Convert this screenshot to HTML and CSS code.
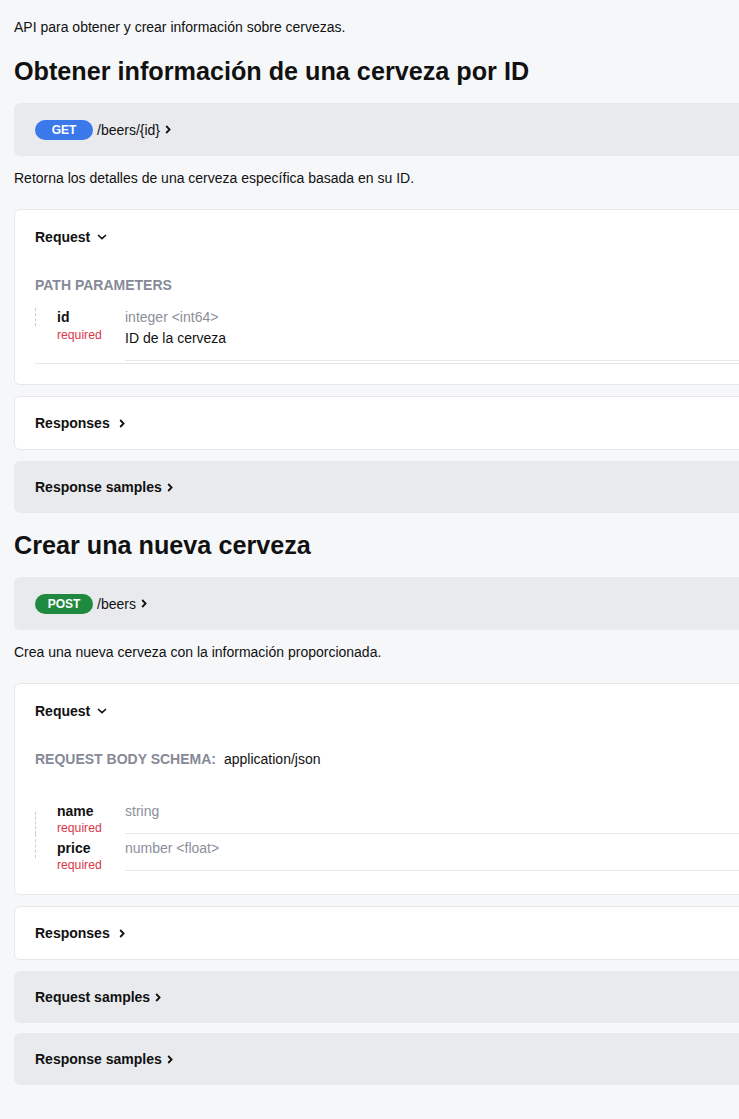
FILE: index.html
```html
<!DOCTYPE html>
<html lang="es">
<head>
<meta charset="utf-8">
<title>API Cervezas</title>
<link rel="stylesheet" href="styles.css">
</head>
<body>
<main class="page">
  <p class="intro">API para obtener y crear información sobre cervezas.</p>

  <section class="op">
    <h2 class="op-title">Obtener información de una cerveza por ID</h2>
    <div class="endpoint">
      <span class="method method-get">GET</span>
      <span class="path">/beers/{id}</span>
      <svg class="chev chev-right" width="6" height="9" viewBox="0 0 6 9"><polyline points="1.2,1 4.6,4.5 1.2,8" fill="none" stroke="#111" stroke-width="1.8"/></svg>
    </div>
    <p class="desc">Retorna los detalles de una cerveza específica basada en su ID.</p>

    <div class="card">
      <div class="card-head">Request
        <svg class="chev chev-down" width="10" height="6" viewBox="0 0 10 6"><polyline points="1,1 5,4.6 9,1" fill="none" stroke="#111" stroke-width="1.6"/></svg>
      </div>
      <div class="section-label">PATH PARAMETERS</div>
      <div class="params params-path">
        <div class="param">
          <div class="rail"><div class="rail-line rail-single"></div></div>
          <div class="pname"><div class="pname-text">id</div><div class="req">required</div></div>
          <div class="pinfo"><div class="ptype">integer &lt;int64&gt;</div><div class="pdesc">ID de la cerveza</div></div>
        </div>
      </div>
    </div>

    <div class="card card-row">Responses
      <svg class="chev chev-right" width="6" height="9" viewBox="0 0 6 9"><polyline points="1.2,1 4.6,4.5 1.2,8" fill="none" stroke="#111" stroke-width="1.8"/></svg>
    </div>
    <div class="bar-row">Response samples
      <svg class="chev chev-right" width="6" height="9" viewBox="0 0 6 9"><polyline points="1.2,1 4.6,4.5 1.2,8" fill="none" stroke="#111" stroke-width="1.8"/></svg>
    </div>
  </section>

  <section class="op">
    <h2 class="op-title">Crear una nueva cerveza</h2>
    <div class="endpoint">
      <span class="method method-post">POST</span>
      <span class="path">/beers</span>
      <svg class="chev chev-right" width="6" height="9" viewBox="0 0 6 9"><polyline points="1.2,1 4.6,4.5 1.2,8" fill="none" stroke="#111" stroke-width="1.8"/></svg>
    </div>
    <p class="desc">Crea una nueva cerveza con la información proporcionada.</p>

    <div class="card">
      <div class="card-head">Request
        <svg class="chev chev-down" width="10" height="6" viewBox="0 0 10 6"><polyline points="1,1 5,4.6 9,1" fill="none" stroke="#111" stroke-width="1.6"/></svg>
      </div>
      <div class="section-label schema">REQUEST BODY SCHEMA: <span class="mime">application/json</span></div>
      <div class="params params-body">
        <div class="param">
          <div class="rail"><div class="rail-line rail-first"></div></div>
          <div class="pname"><div class="pname-text">name</div><div class="req">required</div></div>
          <div class="pinfo"><div class="ptype">string</div></div>
        </div>
        <div class="param">
          <div class="rail"><div class="rail-line rail-last"></div></div>
          <div class="pname"><div class="pname-text">price</div><div class="req">required</div></div>
          <div class="pinfo"><div class="ptype">number &lt;float&gt;</div></div>
        </div>
      </div>
    </div>

    <div class="card card-row">Responses
      <svg class="chev chev-right" width="6" height="9" viewBox="0 0 6 9"><polyline points="1.2,1 4.6,4.5 1.2,8" fill="none" stroke="#111" stroke-width="1.8"/></svg>
    </div>
    <div class="bar-row">Request samples
      <svg class="chev chev-right" width="6" height="9" viewBox="0 0 6 9"><polyline points="1.2,1 4.6,4.5 1.2,8" fill="none" stroke="#111" stroke-width="1.8"/></svg>
    </div>
    <div class="bar-row">Response samples
      <svg class="chev chev-right" width="6" height="9" viewBox="0 0 6 9"><polyline points="1.2,1 4.6,4.5 1.2,8" fill="none" stroke="#111" stroke-width="1.8"/></svg>
    </div>
  </section>
</main>
</body>
</html>
```

FILE: styles.css
```css
html, body {
  margin: 0;
  padding: 0;
  background: #f6f7f9;
  overflow: hidden;
}
body {
  font-family: "Liberation Sans", Arial, sans-serif;
  font-size: 14px;
  line-height: 20px;
  color: #111;
}
.page {
  width: 800px;
  padding: 17px 0 0 14px;
}
.intro {
  margin: 0 0 18px;
}
.op-title {
  margin: 0 0 16px;
  font-size: 25.2px;
  line-height: 32px;
  font-weight: bold;
}
.op + .op .op-title { margin-top: 16px; }
.endpoint {
  display: flex;
  align-items: center;
  height: 53px;
  padding: 0 21px;
  background: #e9eaee;
  border-radius: 6px;
}
.method {
  display: inline-flex;
  justify-content: center;
  align-items: center;
  min-width: 58px;
  height: 20px;
  border-radius: 10px;
  color: #fff;
  font-size: 12px;
  font-weight: bold;
  margin-right: 4px;
}
.method-get { background: #3b79ea; }
.method-post { background: #1f8a3f; }
.path { margin-right: 5px; }
.chev { display: inline-block; flex: none; }
.desc {
  margin: 12px 0 21px;
}
.card {
  background: #fff;
  border: 1px solid #e5e7eb;
  border-radius: 6px;
  padding: 17px 20px 20px;
  margin-bottom: 11px;
}
.card-head {
  display: flex;
  align-items: center;
  font-weight: bold;
  gap: 7px;
}
.section-label {
  margin-top: 28px;
  color: #868a97;
  font-weight: bold;
}
.schema { display: flex; gap: 8px; }
.mime { color: #111; font-weight: normal; }
.params {
  margin-top: 8px;
  padding-bottom: 2px;
}
.params-path { border-bottom: 1px solid #e5e7eb; }
.params-body { margin-top: 28px; padding-bottom: 3px; }
.param {
  display: flex;
  align-items: flex-start;
}
.rail {
  width: 2px;
  flex: none;
  align-self: stretch;
}
.rail-line {
  border-left: 1px dashed #c9ccd3;
}
.rail-single { margin-top: 5px; height: 18px; }
.rail-first { margin-top: 15px; height: calc(100% - 15px); }
.rail-last { height: 24px; }
.pname {
  width: 68px;
  padding: 5px 0 0 20px;
  flex: none;
  margin-bottom: -2px;
}
.pname-text {
  font-weight: bold;
  line-height: 18px;
}
.req {
  color: #d9364a;
  font-size: 12.2px;
  line-height: 16px;
}
.params-path .req { line-height: 18px; }
.pinfo {
  flex: 1;
  border-bottom: 1px solid #e5e7eb;
  padding-top: 5px;
  min-height: 31px;
}
.params-path .pinfo { padding-bottom: 10px; min-height: 0; }
.ptype {
  color: #8b8f9b;
  line-height: 18px;
}
.pdesc {
  line-height: 24px;
}
.card-row {
  display: flex;
  align-items: center;
  gap: 9px;
  font-weight: bold;
  height: 54px;
  padding: 0 20px;
  box-sizing: border-box;
}
.bar-row {
  display: flex;
  align-items: center;
  gap: 5px;
  height: 52px;
  padding: 0 21px;
  background: #e9eaee;
  border-radius: 6px;
  font-weight: bold;
  margin-bottom: 10px;
}
```
